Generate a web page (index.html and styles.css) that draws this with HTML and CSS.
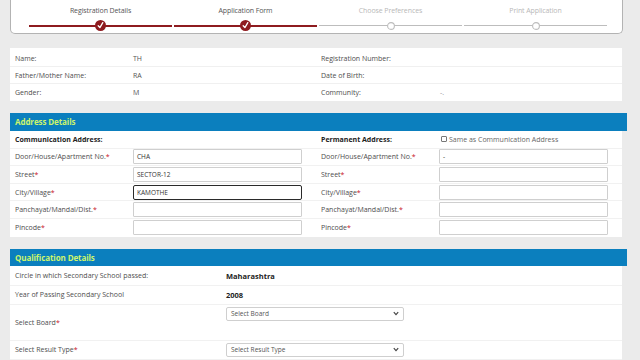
FILE: index.html
```html
<!DOCTYPE html>
<html>
<head>
<meta charset="utf-8">
<link rel="stylesheet" href="styles.css">
</head>
<body>
<div class="steps">
  <div class="step done">
    <div class="step-label">Registration Details</div>
    <div class="step-track"><svg class="mark" width="11" height="11" viewBox="0 0 11 11"><circle cx="5.5" cy="5.5" r="5.5" fill="#8e1b1f"/><path d="M3.2 5.8 L4.9 7.6 L7.8 2.6" fill="none" stroke="#fff" stroke-width="1.3" stroke-linecap="round" stroke-linejoin="round"/></svg></div>
  </div>
  <div class="step done">
    <div class="step-label">Application Form</div>
    <div class="step-track"><svg class="mark" width="11" height="11" viewBox="0 0 11 11"><circle cx="5.5" cy="5.5" r="5.5" fill="#8e1b1f"/><path d="M3.2 5.8 L4.9 7.6 L7.8 2.6" fill="none" stroke="#fff" stroke-width="1.3" stroke-linecap="round" stroke-linejoin="round"/></svg></div>
  </div>
  <div class="step todo">
    <div class="step-label">Choose Preferences</div>
    <div class="step-track"><svg class="mark" width="8" height="8" viewBox="0 0 8 8"><circle cx="4" cy="4" r="3.4" fill="#fff" stroke="#bdbdbd" stroke-width="1.1"/></svg></div>
  </div>
  <div class="step todo">
    <div class="step-label">Print Application</div>
    <div class="step-track"><svg class="mark" width="8" height="8" viewBox="0 0 8 8"><circle cx="4" cy="4" r="3.4" fill="#fff" stroke="#bdbdbd" stroke-width="1.1"/></svg></div>
  </div>
</div>

<div class="info">
  <div class="info-row"><span class="c1">Name:</span><span class="c2">TH</span><span class="c3">Registration Number:</span><span class="c4"></span></div>
  <div class="info-row"><span class="c1">Father/Mother Name:</span><span class="c2">RA</span><span class="c3">Date of Birth:</span><span class="c4"></span></div>
  <div class="info-row last"><span class="c1">Gender:</span><span class="c2">M</span><span class="c3">Community:</span><span class="c4 faint">-.</span></div>
</div>

<div class="section">
  <div class="sec-head">Address Details</div>
  <div class="sec-body">
    <div class="arow">
      <span class="lbl strong">Communication Address:</span><span></span><span></span>
      <span class="lbl strong">Permanent Address:</span>
      <span class="same"><span class="cbox"></span>Same as Communication Address</span>
    </div>
    <div class="arow">
      <span class="lbl">Door/House/Apartment No.<i>*</i></span><span class="inp">CHA</span><span></span>
      <span class="lbl">Door/House/Apartment No.<i>*</i></span><span class="inp">-</span>
    </div>
    <div class="arow">
      <span class="lbl">Street<i>*</i></span><span class="inp">SECTOR-12</span><span></span>
      <span class="lbl">Street<i>*</i></span><span class="inp"></span>
    </div>
    <div class="arow">
      <span class="lbl">City/Village<i>*</i></span><span class="inp focus">KAMOTHE</span><span></span>
      <span class="lbl">City/Village<i>*</i></span><span class="inp"></span>
    </div>
    <div class="arow">
      <span class="lbl">Panchayat/Mandal/Dist.<i>*</i></span><span class="inp"></span><span></span>
      <span class="lbl">Panchayat/Mandal/Dist.<i>*</i></span><span class="inp"></span>
    </div>
    <div class="arow last">
      <span class="lbl">Pincode<i>*</i></span><span class="inp"></span><span></span>
      <span class="lbl">Pincode<i>*</i></span><span class="inp"></span>
    </div>
  </div>
</div>

<div class="section qual">
  <div class="sec-head">Qualification Details</div>
  <div class="sec-body">
    <div class="qrow first"><span class="qlbl">Circle in which Secondary School passed:</span><span class="qval">Maharashtra</span></div>
    <div class="qrow"><span class="qlbl">Year of Passing Secondary School</span><span class="qval">2008</span></div>
    <div class="qrow tall">
      <span class="qlbl">Select Board<i>*</i></span>
      <span class="qctl"><span class="sel"><span>Select Board</span><svg width="6" height="5" viewBox="0 0 6 5"><path d="M0.8 1.2 L3 3.6 L5.2 1.2" fill="none" stroke="#444" stroke-width="1.2"/></svg></span></span>
    </div>
    <div class="qrow">
      <span class="qlbl">Select Result Type<i>*</i></span>
      <span class="qctl"><span class="sel"><span>Select Result Type</span><svg width="6" height="5" viewBox="0 0 6 5"><path d="M0.8 1.2 L3 3.6 L5.2 1.2" fill="none" stroke="#444" stroke-width="1.2"/></svg></span></span>
    </div>
  </div>
</div>
</body>
</html>
```

FILE: styles.css
```css
* { box-sizing: border-box; }
html, body { margin: 0; padding: 0; }
body {
  width: 640px;
  height: 360px;
  overflow: hidden;
  background: #ebebeb;
  font-family: "Open Sans", "Liberation Sans", sans-serif;
  font-size: 7px;
  color: #4d4d4d;
}

/* progress steps */
.steps {
  margin-left: 10px;
  width: 613px;
  height: 34px;
  background: #fff;
  border: 1px solid #b3b3b3;
  border-top: none;
  border-radius: 0 0 5px 5px;
  padding-left: 18px;
  display: flex;
  gap: 2px;
}
.step {
  width: 143px;
  display: flex;
  flex-direction: column;
  align-items: center;
}
.step-label {
  height: 20px;
  line-height: 21px;
  font-size: 7px;
  letter-spacing: -0.1px;
}
.done .step-label { color: #555; }
.todo .step-label { color: #b8b8b8; }
.step-track {
  width: 100%;
  height: 11px;
  display: flex;
  align-items: center;
  justify-content: center;
}
.done .step-track {
  background: linear-gradient(#8e1b1f, #8e1b1f) center / 100% 2px no-repeat;
}
.todo .step-track {
  background: linear-gradient(#bdbdbd, #bdbdbd) center / 100% 1px no-repeat;
}
.mark { display: block; }

/* personal info */
.info {
  margin: 14px 0 0 10px;
  width: 612px;
  padding-top: 2px;
  background: #fff;
}
.info-row {
  height: 17px;
  display: flex;
  align-items: center;
  border-bottom: 1px solid #f0f0f0;
  padding-left: 5px;
}
.info-row.last { border-bottom: none; }
.c1 { width: 118px; }
.c2 { width: 188px; color: #555; }
.c3 { width: 119px; }
.c4 { flex: 1; }
.faint { color: #999; }

/* sections */
.section { margin: 12px 0 0 10px; }
.sec-head {
  width: 617px;
  height: 18px;
  background: #0b7fbe;
  color: #cdf56c;
  font-weight: 700;
  font-size: 8px;
  line-height: 18px;
  padding-left: 5px;
  letter-spacing: -0.1px;
}
.sec-body {
  width: 612px;
  background: #fff;
}
.arow {
  height: 17.6px;
  display: grid;
  grid-template-columns: 118px 169px 19px 118px 169px;
  align-items: center;
  padding-left: 5px;
  border-bottom: 1px solid #f1f1f1;
}
.arow.last { border-bottom: none; }
.lbl { color: #4d4d4d; white-space: nowrap; }
.lbl.strong { color: #222; font-weight: 700; }
i { font-style: normal; color: #c8101e; }
.inp {
  height: 15px;
  border: 1px solid #cfcfcf;
  border-radius: 1px;
  padding-left: 3px;
  line-height: 13px;
  color: #333;
  font-size: 6.5px;
}
.inp.focus {
  border-color: #2a2a2a;
  border-radius: 2px;
}
.same {
  display: flex;
  align-items: center;
  white-space: nowrap;
  color: #666;
  padding-left: 2px;
}
.cbox {
  width: 6px;
  height: 6px;
  border: 1px solid #777;
  border-radius: 1px;
  margin-right: 2px;
  background: #fff;
}

/* qualification */
.qual { margin-top: 12px; }
.qual .sec-head { height: 17px; line-height: 17px; }
.qrow {
  height: 19px;
  display: flex;
  align-items: center;
  padding-left: 5px;
  border-bottom: 1px solid #f1f1f1;
}
.qrow.first { height: 20px; padding-top: 1px; }
.qrow.tall {
  height: 36px;
  align-items: flex-start;
}
.qrow.tall .qlbl { align-self: center; padding-top: 1px; }
.qrow.tall .qctl { padding-top: 2px; }
.qlbl { width: 211px; color: #4d4d4d; }
.qval { color: #222; font-weight: 700; font-size: 7.5px; }
.sel {
  width: 178px;
  height: 14px;
  border: 1px solid #cfcfcf;
  border-radius: 2px;
  display: flex;
  align-items: center;
  justify-content: space-between;
  padding: 0 4px 0 4px;
  color: #555;
  font-size: 6.5px;
  background: #fff;
}
.sel svg { display: block; }
```
